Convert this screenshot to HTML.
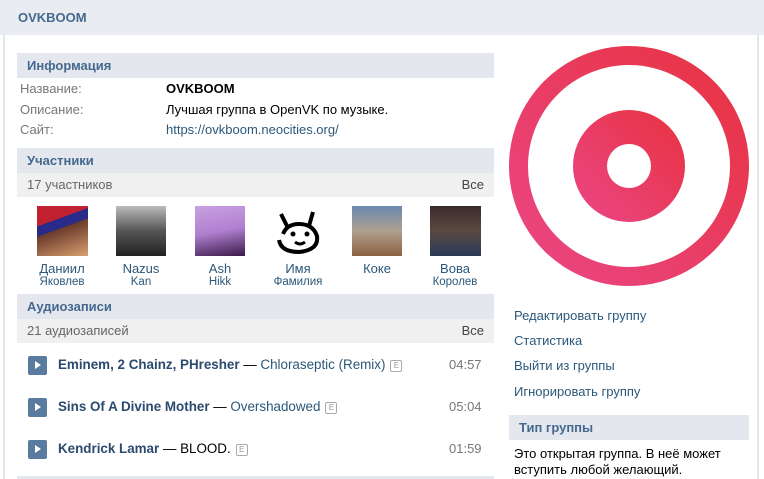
<!DOCTYPE html>
<html><head><meta charset="utf-8"><style>
*{margin:0;padding:0;box-sizing:border-box}
body{width:764px;height:479px;overflow:hidden;background:#fff;font-family:"Liberation Sans","DejaVu Sans",sans-serif;font-size:13px;color:#000;position:relative}
.a{position:absolute;white-space:nowrap}
.top{position:absolute;left:0;top:0;width:764px;height:35px;background:#e9edf1}
.hdr{position:absolute;background:#e4e8ee;color:#45688e;font-weight:bold;font-size:13px;padding-left:10px;line-height:25px}
.cnt{position:absolute;background:#f0f0f0;color:#666;line-height:24px;padding:0 10px}
.lbl{color:#777}
.lnk{color:#2b587a}
.nm{position:absolute;width:70px;text-align:center;color:#2b587a;font-size:13px}
.nm small{display:block;font-size:11.5px;color:#2b587a;margin-top:0px}
.play{position:absolute;left:28px;width:19px;height:19px;background:#5a7ba0;border-radius:2px}
.play:after{content:"";position:absolute;left:7px;top:5px;border-left:6px solid #fff;border-top:4.5px solid transparent;border-bottom:4.5px solid transparent}
.tr{position:absolute;left:58px;color:#2b587a;font-size:13.4px}
.tr b{color:#2b4a6e}
.e{display:inline-block;width:12px;height:12px;border:1px solid #aaa;border-radius:2px;font-size:8px;color:#999;text-align:center;line-height:10px;vertical-align:1px;margin-left:5px}
.tm{position:absolute;left:449px;color:#777;font-size:13px}
.rl{position:absolute;left:514px;color:#2b587a}
</style></head><body>
<div class="top"></div>
<div class="a" style="left:18px;top:10px;color:#45688e;font-weight:bold;font-size:13px">OVKBOOM</div>
<div style="position:absolute;left:3px;top:35px;width:2px;height:444px;background:#e4e8ee"></div>
<div style="position:absolute;left:757px;top:35px;width:2px;height:444px;background:#e4e8ee"></div>

<div class="hdr" style="left:17px;top:53px;width:477px;height:25px">Информация</div>
<div class="a lbl" style="left:20px;top:81px">Название:</div>
<div class="a" style="left:166px;top:81px;font-weight:bold">OVKBOOM</div>
<div class="a lbl" style="left:20px;top:102px">Описание:</div>
<div class="a" style="left:166px;top:102px">Лучшая группа в OpenVK по музыке.</div>
<div class="a lbl" style="left:20px;top:122px">Сайт:</div>
<div class="a lnk" style="left:166px;top:122px">https://ovkboom.neocities.org/</div>

<div class="hdr" style="left:17px;top:148px;width:477px;height:25px">Участники</div>
<div class="cnt" style="left:17px;top:173px;width:477px">17 участников<span style="float:right;color:#444">Все</span></div>

<div style="position:absolute;left:37px;top:206px;width:51px;height:50px;background:linear-gradient(160deg,#c02030 0 30%,#2a2a8a 30% 45%,#6a3a2a 45%,#d9a070)"></div>
<div style="position:absolute;left:116px;top:206px;width:50px;height:50px;background:linear-gradient(180deg,#bbb,#555 50%,#222)"></div>
<div style="position:absolute;left:195px;top:206px;width:50px;height:50px;background:linear-gradient(170deg,#c9a0e0,#b080d0 50%,#3a1a4a)"></div>
<div style="position:absolute;left:273px;top:206px;width:51px;height:50px;background:#fff;border:0"><svg width="51" height="50"><path d="M8 8 L14 20 M40 6 L36 20 M10 28 Q14 18 26 18 Q40 18 44 30 Q46 44 26 46 Q8 46 6 34" fill="none" stroke="#000" stroke-width="4"/><circle cx="20" cy="28" r="2.5"/><circle cx="34" cy="28" r="2.5"/><path d="M22 36 Q27 40 32 36" stroke="#000" stroke-width="3" fill="none"/></svg></div>
<div style="position:absolute;left:352px;top:206px;width:50px;height:50px;background:linear-gradient(180deg,#6a8ab0,#b0a090 50%,#8a6040)"></div>
<div style="position:absolute;left:430px;top:206px;width:51px;height:50px;background:linear-gradient(180deg,#3a2a2a,#5a4a40 50%,#2a3a5a)"></div>

<div class="nm" style="left:27px;top:261px">Даниил<small>Яковлев</small></div>
<div class="nm" style="left:106px;top:261px">Nazus<small>Kan</small></div>
<div class="nm" style="left:185px;top:261px">Ash<small>Hikk</small></div>
<div class="nm" style="left:263px;top:261px">Имя<small>Фамилия</small></div>
<div class="nm" style="left:342px;top:261px">Коке</div>
<div class="nm" style="left:420px;top:261px">Вова<small>Королев</small></div>

<div class="hdr" style="left:17px;top:294px;width:477px;height:25px">Аудиозаписи</div>
<div class="cnt" style="left:17px;top:319px;width:477px">21 аудиозаписей<span style="float:right;color:#444">Все</span></div>

<div class="play" style="top:356px"></div>
<div class="a tr" style="top:357px"><b>Eminem, 2 Chainz, PHresher</b> <span style="color:#000">—</span> Chloraseptic (Remix)<span class="e">E</span></div>
<div class="a tm" style="top:357px">04:57</div>
<div class="play" style="top:398px"></div>
<div class="a tr" style="top:399px"><b>Sins Of A Divine Mother</b> <span style="color:#000">—</span> Overshadowed<span class="e">E</span></div>
<div class="a tm" style="top:399px">05:04</div>
<div class="play" style="top:440px"></div>
<div class="a tr" style="top:441px"><b>Kendrick Lamar</b> <span style="color:#000">—</span> <span style="color:#000">BLOOD.</span><span class="e">E</span></div>
<div class="a tm" style="top:441px">01:59</div>
<div style="position:absolute;left:17px;top:476px;width:477px;height:3px;background:#e4e8ee"></div>

<svg style="position:absolute;left:509px;top:46px" width="240" height="240">
<defs><linearGradient id="g" x1="1" y1="0" x2="0" y2="1"><stop offset="0" stop-color="#e8323f"/><stop offset="1" stop-color="#ea4787"/></linearGradient></defs>
<circle cx="120" cy="120" r="120" fill="url(#g)"/>
<circle cx="120" cy="120" r="101" fill="#fff"/>
<circle cx="120" cy="120" r="56" fill="url(#g)"/>
<circle cx="120" cy="120" r="22" fill="#fff"/>
</svg>

<div class="a rl" style="top:308px">Редактировать группу</div>
<div class="a rl" style="top:333px">Статистика</div>
<div class="a rl" style="top:358px">Выйти из группы</div>
<div class="a rl" style="top:384px">Игнорировать группу</div>
<div class="hdr" style="left:509px;top:415px;width:240px;height:25px">Тип группы</div>
<div class="a" style="left:514px;top:446px;line-height:16px">Это открытая группа. В неё может<br>вступить любой желающий.</div>
</body></html>
